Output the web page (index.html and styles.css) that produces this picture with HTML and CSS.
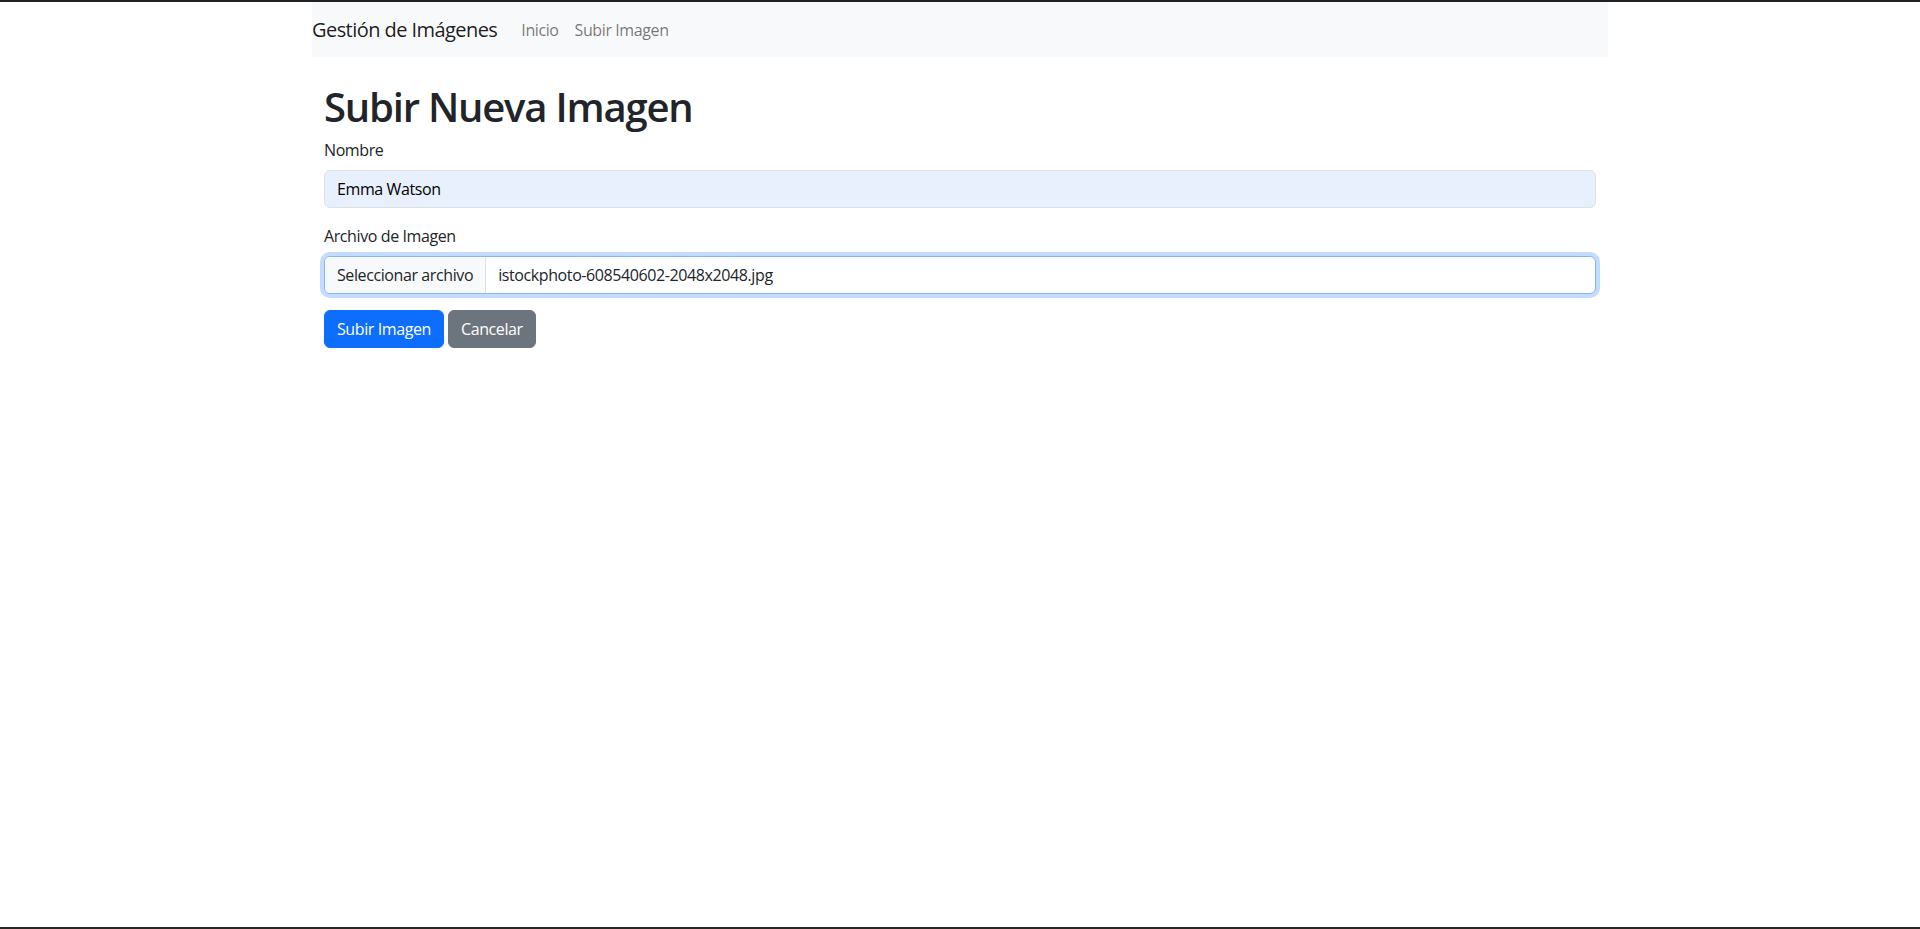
FILE: index.html
```html
<!DOCTYPE html>
<html lang="es">
<head>
<meta charset="utf-8">
<title>Subir Nueva Imagen</title>
<link rel="stylesheet" href="styles.css">
</head>
<body>
<div class="topline"></div>
<div class="container">
  <nav class="navbar">
    <span class="brand">Gestión de Imágenes</span>
    <a class="nav-link" href="#">Inicio</a>
    <a class="nav-link" href="#">Subir Imagen</a>
  </nav>
  <main class="inner">
    <h1 class="title">Subir Nueva Imagen</h1>
    <div class="field">
      <label class="label">Nombre</label>
      <div class="control autofill">Emma Watson</div>
    </div>
    <div class="field">
      <label class="label">Archivo de Imagen</label>
      <div class="control file focus">
        <span class="file-btn">Seleccionar archivo</span>
        <span class="file-name">istockphoto-608540602-2048x2048.jpg</span>
      </div>
    </div>
    <div class="actions">
      <button class="btn primary">Subir Imagen</button>
      <button class="btn secondary">Cancelar</button>
    </div>
  </main>
</div>
<div class="bottomline"></div>
</body>
</html>
```
FILE: styles.css
```css
html, body { height: 100%; }
body {
  margin: 0;
  font-family: "Open Sans", "Noto Sans", sans-serif;
  font-size: 16px;
  line-height: 1.5;
  letter-spacing: -0.025em;
  color: #212529;
  background: #fff;
  display: flex;
  flex-direction: column;
}
.topline { height: 2px; background: #202124; flex: none; }
.bottomline { height: 2px; background: #2a2520; margin-top: auto; flex: none; }
.container {
  width: 100%;
  max-width: 1320px;
  margin: 0 auto;
  padding: 0 12px;
  box-sizing: border-box;
}
.navbar {
  background: #f8f9fa;
  display: flex;
  align-items: center;
  padding: 8px 0;
  height: 55px;
  box-sizing: border-box;
}
.brand {
  font-size: 20px;
  line-height: 30px;
  letter-spacing: -0.028em;
  color: rgba(0,0,0,.9);
  margin-right: 16px;
}
.nav-link {
  color: rgba(0,0,0,.55);
  text-decoration: none;
  padding: 8px;
  font-size: 16px;
}
.inner { padding: 0 12px; margin-top: 26px; }
.title {
  font-size: 40px;
  font-weight: 600;
  line-height: 1.2;
  letter-spacing: -0.03em;
  margin: 0 0 7px;
}
.field { margin-bottom: 16px; }
.label { display: block; margin-bottom: 8px; font-size: 16px; line-height: 24px; }
.control {
  height: 38px;
  box-sizing: border-box;
  border: 1px solid #dee2e6;
  border-radius: 6px;
  padding: 6px 12px;
  font-size: 16px;
  line-height: 24px;
  background: #fff;
}
.autofill { background: #e8f0fe; color: #000; }
.file { display: flex; padding: 0; overflow: hidden; }
.focus { border-color: #86b7fe; box-shadow: 0 0 0 4px rgba(13,110,253,.25); }
.file-btn {
  background: #f8f9fa;
  padding: 6px 12px;
  border-right: 1px solid #dee2e6;
}
.file-name { padding: 6px 12px; }
.actions { display: flex; gap: 4px; }
.btn {
  font-family: inherit;
  font-size: 16px;
  line-height: 24px;
  letter-spacing: inherit;
  padding: 6px 12px;
  border: 1px solid transparent;
  border-radius: 6px;
  color: #fff;
}
.primary { background: #0d6efd; border-color: #0d6efd; }
.secondary { background: #6c757d; border-color: #6c757d; }
```
